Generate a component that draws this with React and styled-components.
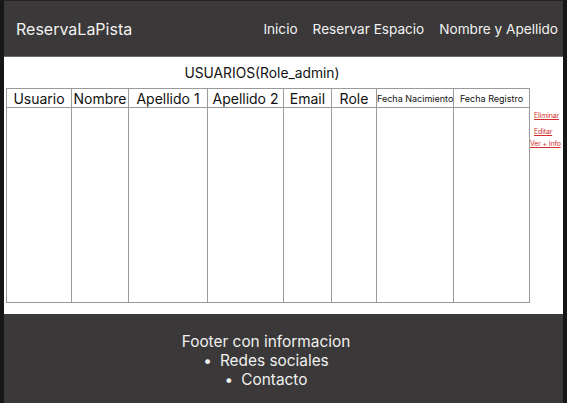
import React from 'react'
import styled, { createGlobalStyle } from 'styled-components'

const GlobalStyle = createGlobalStyle`
  html, body {
    margin: 0;
    padding: 0;
    background: #141414;
  }
  body {
    font-family: Inter, "Noto Sans", sans-serif;
  }
`

const Frame = styled.div`
  width: 567px;
  height: 403px;
  box-sizing: border-box;
  border-left: 4px solid #161616;
  border-right: 4px solid #161616;
  border-top: 1px solid #222;
  display: flex;
  flex-direction: column;
  background: #3a3838;
  overflow: hidden;
`

const Header = styled.header`
  height: 55px;
  display: flex;
  align-items: center;
  justify-content: space-between;
  padding: 0 5px 0 12px;
  border-bottom: 1px solid #6b6b6b;
  color: #f2f2f2;
`

const Brand = styled.span`
  font-size: 16px;
`

const Nav = styled.nav`
  display: flex;
  gap: 15px;
  font-size: 13.6px;
`

const Main = styled.main`
  background: #ffffff;
  height: 257px;
  display: flex;
  flex-direction: column;
  padding: 0 0 0 2px;
  overflow: hidden;
`

const Title = styled.h1`
  margin: 8px 0 0;
  font-size: 13.8px;
  font-weight: 400;
  text-align: center;
  color: #111;
  padding-right: 45px;
  height: 23px;
`

const Content = styled.div`
  display: flex;
  align-items: flex-start;
`

const Table = styled.table`
  width: 523px;
  flex-shrink: 0;
  border-collapse: collapse;
  table-layout: fixed;
  border: 1px solid #9a9a9a;
`

const Th = styled.th`
  border: 1px solid #9a9a9a;
  font-weight: 400;
  font-size: ${({ $small }) => ($small ? '9px' : '14px')};
  height: 18px;
  padding: 0;
  color: #111;
  white-space: nowrap;
  overflow: hidden;
`

const Td = styled.td`
  border-left: 1px solid #9a9a9a;
  border-right: 1px solid #9a9a9a;
  height: 194px;
  padding: 0;
`

const Actions = styled.div`
  flex-shrink: 0;
  display: flex;
  flex-direction: column;
  align-items: flex-start;
  margin-top: 23px;
  font-size: 7px;
  line-height: 10px;
  letter-spacing: -0.15px;
`

const ActionLink = styled.a`
  color: #d32f2f;
  text-decoration: underline;
  margin-left: ${({ $offset }) => $offset}px;
  margin-bottom: ${({ $gap }) => $gap}px;
  white-space: nowrap;
`

const Footer = styled.footer`
  flex: 1;
  display: flex;
  flex-direction: column;
  align-items: center;
  padding-top: 18px;
  padding-right: 35px;
  color: #f0f0f0;
  font-size: 15.4px;
  line-height: 19px;
`

const List = styled.ul`
  margin: 0;
  padding: 0;
  list-style: none;
  text-align: center;
`

const Item = styled.li`
  &::before {
    content: '•';
    margin-right: 8px;
  }
`

const columns = [
  { label: 'Usuario', width: 65 },
  { label: 'Nombre', width: 57 },
  { label: 'Apellido 1', width: 79 },
  { label: 'Apellido 2', width: 76 },
  { label: 'Email', width: 48 },
  { label: 'Role', width: 45 },
  { label: 'Fecha Nacimiento', width: 77, small: true },
  { label: 'Fecha Registro', width: 76, small: true },
]

function App() {
  return (
    <>
      <GlobalStyle />
      <Frame>
        <Header>
          <Brand>ReservaLaPista</Brand>
          <Nav>
            <span>Inicio</span>
            <span>Reservar Espacio</span>
            <span>Nombre y Apellido</span>
          </Nav>
        </Header>
        <Main>
          <Title>USUARIOS(Role_admin)</Title>
          <Content>
            <Table>
              <colgroup>
                {columns.map((c) => (
                  <col key={c.label} style={{ width: c.width }} />
                ))}
              </colgroup>
              <thead>
                <tr>
                  {columns.map((c) => (
                    <Th key={c.label} $small={c.small}>{c.label}</Th>
                  ))}
                </tr>
              </thead>
              <tbody>
                <tr>
                  {columns.map((c) => (
                    <Td key={c.label} />
                  ))}
                </tr>
              </tbody>
            </Table>
            <Actions>
              <ActionLink $offset={4} $gap={6}>Eliminar</ActionLink>
              <ActionLink $offset={4} $gap={2}>Editar</ActionLink>
              <ActionLink $offset={0} $gap={0}>Ver + info</ActionLink>
            </Actions>
          </Content>
        </Main>
        <Footer>
          <span>Footer con informacion</span>
          <List>
            <Item>Redes sociales</Item>
            <Item>Contacto</Item>
          </List>
        </Footer>
      </Frame>
    </>
  )
}

export default App
